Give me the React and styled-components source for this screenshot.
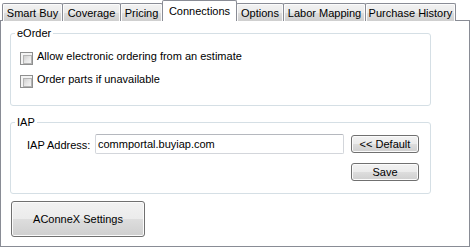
import React from "react";
import styled, { createGlobalStyle, css } from "styled-components";

const Global = createGlobalStyle`
  html, body { margin: 0; padding: 0; background: #ffffff; }
  body { font-family: "Liberation Sans", Arial, sans-serif; font-size: 11px; color: #000; }
  * { box-sizing: border-box; }
`;

const Root = styled.div`
  width: 470px;
  height: 247px;
  display: flex;
  flex-direction: column;
  background: #ffffff;
`;

const TabStrip = styled.div`
  display: flex;
  align-items: flex-end;
  height: 21px;
  padding-left: 2px;
  margin-bottom: -1px;
  position: relative;
  z-index: 1;
`;

const Tab = styled.div`
  width: ${(p) => p.$w}px;
  margin-left: -1px;
  &:first-child { margin-left: 0; }
  border: 1px solid #898c95;
  border-bottom: none;
  border-radius: 2px 2px 0 0;
  text-align: center;
  white-space: nowrap;
  line-height: 16px;
  ${(p) =>
    p.$active
      ? css`
          height: 21px;
          padding-top: 2px;
          background: #ffffff;
          position: relative;
          z-index: 2;
        `
      : css`
          height: 18px;
          padding-top: 1px;
          background: linear-gradient(#f2f2f2 0%, #ebebeb 50%, #dddddd 51%, #cfcfcf 100%);
          box-shadow: inset 1px 1px 0 #fbfbfb, inset -1px 0 0 #fbfbfb;
        `}
`;

const Panel = styled.div`
  width: 470px;
  height: 227px;
  border: 1px solid #898c95;
  background: #ffffff;
  padding: 6px 0 0 9px;
  display: flex;
  flex-direction: column;
  align-items: flex-start;
`;

const GroupBox = styled.fieldset`
  margin: ${(p) => p.$mt || 0}px 0 0 0;
  padding: 0;
  width: 421px;
  height: ${(p) => p.$h}px;
  border: 1px solid #d5dfe5;
  border-radius: 3px;
  min-inline-size: 0;
`;

const Legend = styled.legend`
  margin-left: 4px;
  padding: 0 2px;
  line-height: 13px;
  font-size: 11px;
`;

const CheckList = styled.div`
  display: flex;
  flex-direction: column;
  gap: 8px;
  padding: 10px 0 0 9px;
`;

const CheckRow = styled.label`
  display: flex;
  align-items: flex-start;
  gap: 4px;
  line-height: 13px;
  white-space: nowrap;
`;

const CheckBox = styled.span`
  width: 13px;
  height: 13px;
  margin-top: 2px;
  flex: none;
  border: 1px solid #8e8f8f;
  background: #f4f4f4;
  padding: 2px;
  display: block;
  &::after {
    content: "";
    display: block;
    width: 7px;
    height: 7px;
    border: 1px solid #b4b4b4;
    background: linear-gradient(135deg, #cfcfcf 0%, #e6e6e6 50%, #f6f6f6 100%);
  }
`;

const AddressGrid = styled.div`
  display: grid;
  grid-template-columns: 61px 249px 68px;
  grid-template-rows: 20px 18px;
  column-gap: 7px;
  row-gap: 9px;
  align-items: center;
  padding: 5px 0 0 16px;
`;

const FieldLabel = styled.span`
  white-space: nowrap;
  line-height: 13px;
  padding-top: 2px;
`;

const TextInput = styled.div`
  height: 20px;
  border: 1px solid #d3d6db;
  border-top-color: #b5b8be;
  border-radius: 2px;
  padding: 1px 0 0 2px;
  display: flex;
  align-items: center;
  line-height: 13px;
  white-space: nowrap;
  overflow: hidden;
`;

const Button = styled.div`
  grid-column: 3;
  width: ${(p) => p.$w || 68}px;
  height: ${(p) => p.$h || 18}px;
  border: 1px solid #707070;
  border-radius: 3px;
  background: linear-gradient(#f2f2f2 0%, #ebebeb 50%, #dddddd 51%, #cfcfcf 100%);
  box-shadow: inset 0 0 0 1px #fbfbfb;
  display: flex;
  align-items: center;
  justify-content: center;
  line-height: 13px;
  white-space: nowrap;
`;

const BigButton = styled(Button)`
  margin: 7px 0 0 1px;
`;

const tabs = [
  { label: "Smart Buy", w: 61 },
  { label: "Coverage", w: 59 },
  { label: "Pricing", w: 43 },
  { label: "Connections", w: 75, active: true },
  { label: "Options", w: 48 },
  { label: "Labor Mapping", w: 83 },
  { label: "Purchase History", w: 91 },
];

export default function App() {
  return (
    <>
      <Global />
      <Root>
        <TabStrip>
          {tabs.map((t) => (
            <Tab key={t.label} $w={t.w} $active={t.active}>
              {t.label}
            </Tab>
          ))}
        </TabStrip>
        <Panel>
          <GroupBox $h={79}>
            <Legend>eOrder</Legend>
            <CheckList>
              <CheckRow>
                <CheckBox />
                Allow electronic ordering from an estimate
              </CheckRow>
              <CheckRow>
                <CheckBox />
                Order parts if unavailable
              </CheckRow>
            </CheckList>
          </GroupBox>
          <GroupBox $h={78} $mt={10}>
            <Legend>IAP</Legend>
            <AddressGrid>
              <FieldLabel>IAP Address:</FieldLabel>
              <TextInput>commportal.buyiap.com</TextInput>
              <Button>&lt;&lt; Default</Button>
              <Button>Save</Button>
            </AddressGrid>
          </GroupBox>
          <BigButton $w={134} $h={36}>AConneX Settings</BigButton>
        </Panel>
      </Root>
    </>
  );
}
